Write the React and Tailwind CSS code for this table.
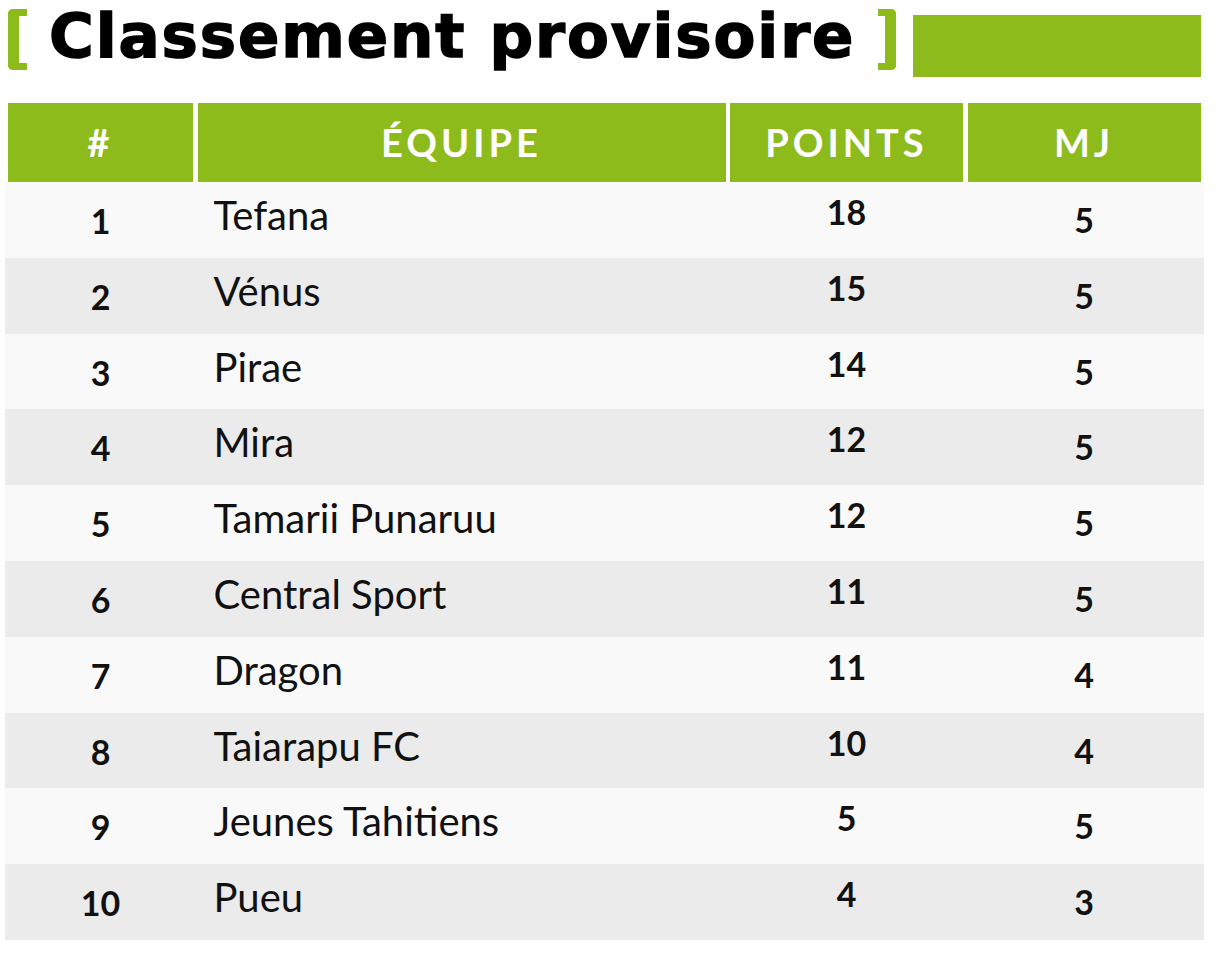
import React from 'react';

const rows = [
  { rank: 1, team: 'Tefana', points: 18, played: 5 },
  { rank: 2, team: 'Vénus', points: 15, played: 5 },
  { rank: 3, team: 'Pirae', points: 14, played: 5 },
  { rank: 4, team: 'Mira', points: 12, played: 5 },
  { rank: 5, team: 'Tamarii Punaruu', points: 12, played: 5 },
  { rank: 6, team: 'Central Sport', points: 11, played: 5 },
  { rank: 7, team: 'Dragon', points: 11, played: 4 },
  { rank: 8, team: 'Taiarapu FC', points: 10, played: 4 },
  { rank: 9, team: 'Jeunes Tahitiens', points: 5, played: 5 },
  { rank: 10, team: 'Pueu', points: 4, played: 3 },
];

const cols = 'grid grid-cols-[185px_528px_233px_233px] gap-x-[4.5px]';

export default function App() {
  return (
    <div className="min-h-[956px] w-[1215px] bg-white px-[5px] font-['Lato',sans-serif]">
      <div className="flex h-[103px] items-start">
        <div className="ml-[3px] mt-[9px] h-[61px] w-[19px] rounded-l-[5px] border-y-[7px] border-l-[11px] border-[#8dbb1c]" />
        <h1 className="ml-[22px] mt-[5px] whitespace-nowrap font-['DejaVu_Sans',sans-serif] text-[61px] font-bold leading-none tracking-[1.9px] text-black [-webkit-text-stroke:1.5px_black]">
          Classement provisoire
        </h1>
        <div className="ml-[23px] mt-[9px] h-[61px] w-[18px] rounded-r-[5px] border-y-[7px] border-r-[11px] border-[#8dbb1c]" />
        <div className="ml-[17px] mr-[9px] mt-[15px] h-[62px] flex-1 bg-[#8dbb1c]" />
      </div>

      <div className={`${cols} ml-[3px] w-fit`}>
        {['#', 'ÉQUIPE', 'POINTS', 'MJ'].map((label) => (
          <div
            key={label}
            className="flex h-[79px] items-center justify-center bg-[#8dbb1c] text-[38px] font-bold tracking-[4px] text-white"
          >
            {label}
          </div>
        ))}
      </div>

      <div className="w-fit">
        {rows.map((row, i) => (
          <div
            key={row.rank}
            className={`${cols} h-[75.8px] px-[3px] text-[#111] ${i % 2 === 0 ? 'bg-[#f9f9f9]' : 'bg-[#ebebeb]'}`}
          >
            <div className="pt-[22px] text-center text-[34px] font-bold leading-none">
              {row.rank}
            </div>
            <div className="pl-[16px] pt-[13px] text-[40px] leading-none">
              {row.team}
            </div>
            <div className="pt-[13px] text-center text-[34px] font-bold leading-none">
              {row.points}
            </div>
            <div className="pt-[21px] text-center text-[34px] font-bold leading-none">
              {row.played}
            </div>
          </div>
        ))}
      </div>
    </div>
  );
}
